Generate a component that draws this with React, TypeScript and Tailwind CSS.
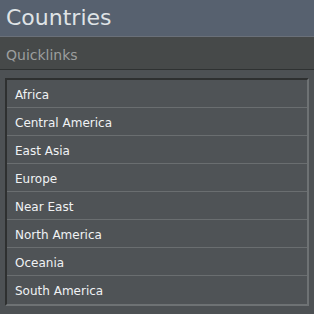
import React from "react";

const items = [
  "Africa",
  "Central America",
  "East Asia",
  "Europe",
  "Near East",
  "North America",
  "Oceania",
  "South America",
];

export default function App() {
  return (
    <div
      className="w-[314px] h-[314px] bg-[#4d5154] flex flex-col overflow-hidden"
      style={{ fontFamily: "Tahoma, 'DejaVu Sans', sans-serif" }}
    >
      <div className="h-[37px] bg-[#57616f] flex items-center px-[6px] border-b border-[#6a7079]">
        <span className="text-[22px] text-[#dfe3e6] leading-none">Countries</span>
      </div>
      <div className="h-[33px] bg-[#464949] flex items-center px-[6px] pt-[3px] border-b border-[#2f3232]">
        <span className="text-[14px] text-[#9c9e9e] leading-none">Quicklinks</span>
      </div>
      <div className="px-[5px] pt-[8px]">
        <div className="border-2 border-t-[#2e3030] border-l-[#2e3030] border-r-[#6e7274] border-b-[#6e7274] bg-[#4f5356]">
          {items.map((it, i) => (
            <div
              key={it}
              className={
                "h-[28px] flex items-center px-[8px] pt-[2px] text-[12px] text-[#f0f2f4] " +
                (i < items.length - 1 ? "border-b border-[#6a6e70]" : "")
              }
            >
              {it}
            </div>
          ))}
        </div>
      </div>
    </div>
  );
}
